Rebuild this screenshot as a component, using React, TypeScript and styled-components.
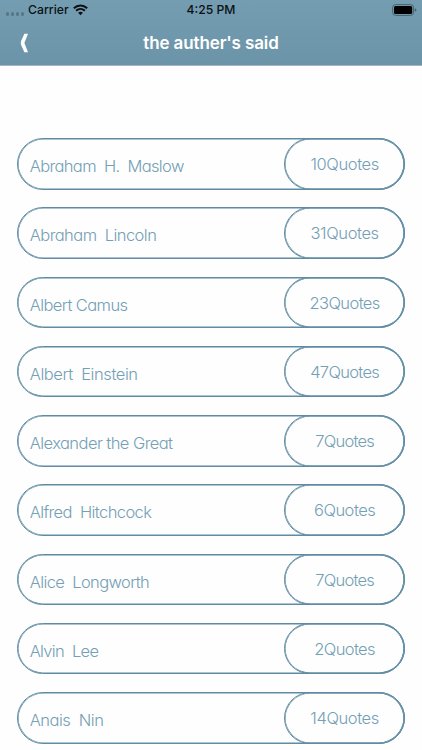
import React from "react";
import styled, { createGlobalStyle } from "styled-components";

const GlobalStyle = createGlobalStyle`
  * { box-sizing: border-box; }
  body { margin: 0; background: #fefefe; overflow: hidden; }
`;

const Screen = styled.main`
  width: 422px;
  height: 750px;
  overflow: hidden;
  background: #fefefe;
  font-family: Inter, "Liberation Sans", sans-serif;
`;

const Header = styled.header`
  height: 66px;
  background: linear-gradient(#749db1, #6c94a8);
  border-bottom: 1px solid #a3b5c3;
`;

const StatusBar = styled.div`
  display: grid;
  grid-template-columns: 1fr auto 1fr;
  height: 20px;
  align-items: center;
  padding: 0 5px 0 6px;
  color: #0b1115;
  font-size: 12.2px;
  font-weight: 500;
  line-height: 20px;
`;

const Carrier = styled.div`
  display: flex;
  align-items: center;
`;

const Signal = styled.div`
  display: flex;
  gap: 1.7px;
  margin: 8px 4px 0 0.3px;
`;

const Dot = styled.i`
  width: 3.2px;
  height: 3.2px;
  border-radius: 50%;
  background: #587786;
`;

const CarrierName = styled.span`
  margin-right: 4.6px;
`;

const Clock = styled.span`
  margin-right: 1px;
`;

const BatterySlot = styled.div`
  display: flex;
  justify-content: flex-end;
`;

const NavBar = styled.nav`
  display: grid;
  grid-template-columns: 48px 1fr 48px;
  height: 45px;
  align-items: center;
`;

const BackButton = styled.button`
  display: flex;
  height: 44px;
  padding: 0 0 0 20px;
  align-items: center;
  border: 0;
  background: none;
`;

const Title = styled.h1`
  margin: 0;
  color: #fff;
  text-align: center;
  font-size: 17px;
  font-weight: 600;
  line-height: 24px;
  letter-spacing: -0.12px;
`;

const List = styled.ul`
  display: flex;
  flex-direction: column;
  gap: 17.75px;
  margin: 0;
  padding: 72.2px 16.9px 0 16.5px;
  list-style: none;
`;

const Row = styled.li`
  display: flex;
  flex: none;
  height: 51.5px;
  justify-content: space-between;
  border: 1px solid #5f8ca3;
  box-shadow: inset 0 0 0 0.6px #5f8ca3;
  border-radius: 26px;
`;

const Name = styled.span<{ $tracking: number }>`
  padding: 4px 0 0 12.2px;
  color: #74a0b5;
  font-size: 16.5px;
  font-weight: 300;
  line-height: 46px;
  letter-spacing: ${({ $tracking }) => $tracking}px;
  white-space: pre;
  font-feature-settings: "cv11";
`;

const Count = styled.span<{ $tracking: number }>`
  width: 121px;
  height: 51.5px;
  margin: -1px -1px 0 0;
  border: 1px solid #5f8ca3;
  box-shadow: inset 0 0 0 0.6px #5f8ca3;
  border-radius: 26px;
  color: #74a0b5;
  font-size: 16.5px;
  font-weight: 300;
  line-height: 51px;
  letter-spacing: ${({ $tracking }) => $tracking}px;
  text-align: center;
  font-feature-settings: "cv11";
`;

const WifiIcon = () => (
  <svg width="15" height="12" viewBox="0 0 15 12" fill="none" stroke="#0b1115" strokeWidth="2">
    <path d="M.8 4.2C4.7.5 10.3.5 14.2 4.2" />
    <path d="M3.1 6.8C5.7 4.4 9.3 4.4 11.9 6.8" />
    <path d="M5.1 8.8Q7.5 6.7 9.9 8.8L7.5 11.2Z" fill="#0b1115" stroke="none" />
  </svg>
);

const BatteryIcon = () => (
  <svg width="25" height="12" viewBox="0 0 25 12">
    <rect x=".6" y=".6" width="21" height="10.8" rx="3" fill="none" stroke="#48616e" />
    <rect x="2" y="2" width="18.2" height="8" rx="1.5" fill="#000" />
    <path d="M22.8 4.2Q24.5 4.8 24.5 6T22.8 7.8Z" fill="#48616e" />
  </svg>
);

const BackIcon = () => (
  <svg width="9" height="20" viewBox="0 0 9 20">
    <path d="M4.4.8H8L4.4 10 8 19.2H4.4L1.2 12.2Q.2 10 1.2 7.8Z" fill="#fff" />
  </svg>
);

const authors = [
  { name: "Abraham  H.  Maslow", count: 10, nameTracking: -0.64, countTracking: -0.4 },
  { name: "Abraham  Lincoln", count: 31, nameTracking: -0.55, countTracking: -0.4 },
  { name: "Albert Camus", count: 23, nameTracking: -0.58, countTracking: -0.6 },
  { name: "Albert  Einstein", count: 47, nameTracking: -0.42, countTracking: -0.7 },
  { name: "Alexander the Great", count: 7, nameTracking: -0.56, countTracking: -0.75 },
  { name: "Alfred  Hitchcock", count: 6, nameTracking: -0.6, countTracking: -0.5 },
  { name: "Alice  Longworth", count: 7, nameTracking: -0.62, countTracking: -0.75 },
  { name: "Alvin  Lee", count: 2, nameTracking: -0.68, countTracking: -0.6 },
  { name: "Anais  Nin", count: 14, nameTracking: -0.48, countTracking: -0.4 },
];

export default function App() {
  return (
    <Screen>
      <GlobalStyle />
      <Header>
        <StatusBar>
          <Carrier>
            <Signal><Dot /><Dot /><Dot /><Dot /></Signal>
            <CarrierName>Carrier</CarrierName>
            <WifiIcon />
          </Carrier>
          <Clock>4:25 PM</Clock>
          <BatterySlot><BatteryIcon /></BatterySlot>
        </StatusBar>
        <NavBar>
          <BackButton aria-label="Back"><BackIcon /></BackButton>
          <Title>the auther's said</Title>
        </NavBar>
      </Header>
      <List>
        {authors.map((author) => (
          <Row key={author.name}>
            <Name $tracking={author.nameTracking}>{author.name}</Name>
            <Count $tracking={author.countTracking}>{author.count}Quotes</Count>
          </Row>
        ))}
      </List>
    </Screen>
  );
}
